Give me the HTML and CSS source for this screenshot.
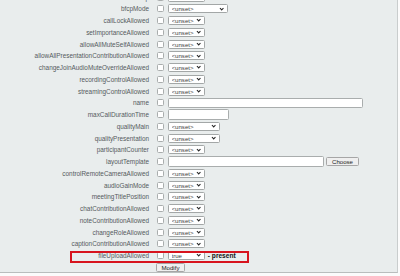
FILE: index.html
```html
<!DOCTYPE html>
<html lang="en">
<head>
  <meta charset="UTF-8">
  <meta name="viewport" content="width=device-width, initial-scale=1.0">
  <title>Conference settings</title>
  <link rel="stylesheet" href="styles.css">
</head>
<body>
  <div class="panel">
    <form class="settings">
      <table class="fields">
        <tr>
          <td class="lbl">screenShareGroup</td>
          <td class="chk"><input type="checkbox"></td>
          <td><span class="sel"><select class="w-s"><option>&lt;unset&gt;</option></select></span></td>
        </tr>
        <tr>
          <td class="lbl">bfcpMode</td>
          <td class="chk"><input type="checkbox"></td>
          <td><span class="sel"><select class="w-l"><option>&lt;unset&gt;</option></select></span></td>
        </tr>
        <tr>
          <td class="lbl">callLockAllowed</td>
          <td class="chk"><input type="checkbox"></td>
          <td><span class="sel"><select class="w-s"><option>&lt;unset&gt;</option></select></span></td>
        </tr>
        <tr>
          <td class="lbl">setImportanceAllowed</td>
          <td class="chk"><input type="checkbox"></td>
          <td><span class="sel"><select class="w-s"><option>&lt;unset&gt;</option></select></span></td>
        </tr>
        <tr>
          <td class="lbl">allowAllMuteSelfAllowed</td>
          <td class="chk"><input type="checkbox"></td>
          <td><span class="sel"><select class="w-s"><option>&lt;unset&gt;</option></select></span></td>
        </tr>
        <tr>
          <td class="lbl">allowAllPresentationContributionAllowed</td>
          <td class="chk"><input type="checkbox"></td>
          <td><span class="sel"><select class="w-s"><option>&lt;unset&gt;</option></select></span></td>
        </tr>
        <tr>
          <td class="lbl">changeJoinAudioMuteOverrideAllowed</td>
          <td class="chk"><input type="checkbox"></td>
          <td><span class="sel"><select class="w-s"><option>&lt;unset&gt;</option></select></span></td>
        </tr>
        <tr>
          <td class="lbl">recordingControlAllowed</td>
          <td class="chk"><input type="checkbox"></td>
          <td><span class="sel"><select class="w-s"><option>&lt;unset&gt;</option></select></span></td>
        </tr>
        <tr>
          <td class="lbl">streamingControlAllowed</td>
          <td class="chk"><input type="checkbox"></td>
          <td><span class="sel"><select class="w-s"><option>&lt;unset&gt;</option></select></span></td>
        </tr>
        <tr>
          <td class="lbl">name</td>
          <td class="chk"><input type="checkbox"></td>
          <td><input type="text" class="txt w-name"></td>
        </tr>
        <tr>
          <td class="lbl">maxCallDurationTime</td>
          <td class="chk"><input type="checkbox"></td>
          <td><input type="text" class="txt w-dur"></td>
        </tr>
        <tr>
          <td class="lbl">qualityMain</td>
          <td class="chk"><input type="checkbox"></td>
          <td><span class="sel"><select class="w-m"><option>&lt;unset&gt;</option></select></span></td>
        </tr>
        <tr>
          <td class="lbl">qualityPresentation</td>
          <td class="chk"><input type="checkbox"></td>
          <td><span class="sel"><select class="w-m"><option>&lt;unset&gt;</option></select></span></td>
        </tr>
        <tr>
          <td class="lbl">participantCounter</td>
          <td class="chk"><input type="checkbox"></td>
          <td><span class="sel"><select class="w-s"><option>&lt;unset&gt;</option></select></span></td>
        </tr>
        <tr>
          <td class="lbl">layoutTemplate</td>
          <td class="chk"><input type="checkbox"></td>
          <td class="with-btn"><input type="text" class="txt w-tpl"><button type="button" class="btn">Choose</button></td>
        </tr>
        <tr>
          <td class="lbl">controlRemoteCameraAllowed</td>
          <td class="chk"><input type="checkbox"></td>
          <td><span class="sel"><select class="w-s"><option>&lt;unset&gt;</option></select></span></td>
        </tr>
        <tr>
          <td class="lbl">audioGainMode</td>
          <td class="chk"><input type="checkbox"></td>
          <td><span class="sel"><select class="w-s"><option>&lt;unset&gt;</option></select></span></td>
        </tr>
        <tr>
          <td class="lbl">meetingTitlePosition</td>
          <td class="chk"><input type="checkbox"></td>
          <td><span class="sel"><select class="w-s"><option>&lt;unset&gt;</option></select></span></td>
        </tr>
        <tr>
          <td class="lbl">chatContributionAllowed</td>
          <td class="chk"><input type="checkbox"></td>
          <td><span class="sel"><select class="w-s"><option>&lt;unset&gt;</option></select></span></td>
        </tr>
        <tr>
          <td class="lbl">noteContributionAllowed</td>
          <td class="chk"><input type="checkbox"></td>
          <td><span class="sel"><select class="w-s"><option>&lt;unset&gt;</option></select></span></td>
        </tr>
        <tr>
          <td class="lbl">changeRoleAllowed</td>
          <td class="chk"><input type="checkbox"></td>
          <td><span class="sel"><select class="w-s"><option>&lt;unset&gt;</option></select></span></td>
        </tr>
        <tr>
          <td class="lbl">captionContributionAllowed</td>
          <td class="chk"><input type="checkbox"></td>
          <td><span class="sel"><select class="w-s"><option>&lt;unset&gt;</option></select></span></td>
        </tr>
        <tr>
          <td class="lbl">fileUploadAllowed</td>
          <td class="chk"><input type="checkbox"></td>
          <td><span class="sel"><select class="w-t"><option>true</option><option>false</option></select></span><span class="state"> - present</span></td>
        </tr>
        <tr>
          <td></td>
          <td colspan="2" class="submit"><button type="submit" class="btn">Modify</button></td>
        </tr>
      </table>
    </form>
    <div class="highlight"></div>
  </div>
</body>
</html>
```

FILE: styles.css
```css
body {
  margin: 0;
  background-color: #fbfbfb;
  font-family: "Liberation Sans", Arial, sans-serif;
  overflow: hidden;
}
.panel {
  position: relative;
  width: 397px;
  height: 272px;
  background-color: #e9eded;
  border-right: 1px solid #c9cdcd;
  border-bottom: 1px solid #b9bdbd;
  overflow: hidden;
}
.fields {
  border-collapse: collapse;
  margin-top: -8.8px;
  font-size: 6.4px;
  line-height: 7px;
}
.fields td {
  height: 11.75px;
  padding: 0;
  vertical-align: middle;
  white-space: nowrap;
}
.lbl {
  width: 149px;
  text-align: right;
  color: #555b5d;
}
.chk {
  width: 19px;
}
.chk input {
  appearance: none;
  -webkit-appearance: none;
  display: block;
  width: 7px;
  height: 7px;
  margin: 0 0 0 8px;
  background-color: #fff;
  border: 1px solid #a9adad;
  border-radius: 1.5px;
  box-sizing: border-box;
}
.sel {
  position: relative;
  display: inline-block;
  vertical-align: middle;
}
.sel::after {
  content: "";
  position: absolute;
  right: 5px;
  top: 2.2px;
  width: 2.4px;
  height: 2.4px;
  border-right: 1.3px solid #222;
  border-bottom: 1.3px solid #222;
  transform: rotate(45deg);
  pointer-events: none;
}
.sel select {
  appearance: none;
  -webkit-appearance: none;
  display: block;
  height: 9px;
  margin: 0;
  padding: 0 0 0 2.5px;
  background-color: #fff;
  border: 1px solid #a3a7a7;
  border-radius: 1.5px;
  box-sizing: border-box;
  font-family: "Liberation Sans", Arial, sans-serif;
  font-size: 6.1px;
  line-height: 7px;
  color: #3d3d3d;
}
.w-s { width: 37px; }
.w-m { width: 52px; }
.w-l { width: 60px; }
.w-t {
  width: 37px;
  color: #111;
}
.state {
  vertical-align: middle;
  margin-left: 1px;
  font-size: 6.6px;
  font-weight: bold;
  color: #111;
}
.txt {
  display: inline-block;
  vertical-align: middle;
  height: 10.5px;
  margin: 0;
  padding: 0;
  background-color: #fff;
  border: 1px solid #a9adad;
  border-radius: 1.5px;
  box-sizing: border-box;
}
.w-name { width: 195px; }
.w-dur { width: 61px; }
.w-tpl { width: 156px; }
.btn {
  display: inline-block;
  vertical-align: middle;
  height: 9px;
  margin: 0;
  padding: 0 4px;
  background-color: #efefef;
  border: 1px solid #a6a6a6;
  border-radius: 1.5px;
  box-sizing: border-box;
  font-family: "Liberation Sans", Arial, sans-serif;
  font-size: 6.1px;
  line-height: 7px;
  color: #222;
}
.with-btn .btn {
  margin-left: 2px;
  padding: 0 5px;
}
.submit .btn {
  margin-left: 7px;
  padding: 0 4.5px;
}
.highlight {
  position: absolute;
  left: 70px;
  top: 250.5px;
  width: 179px;
  height: 12px;
  border: 2px solid #d7141e;
  box-sizing: border-box;
  pointer-events: none;
}
```
